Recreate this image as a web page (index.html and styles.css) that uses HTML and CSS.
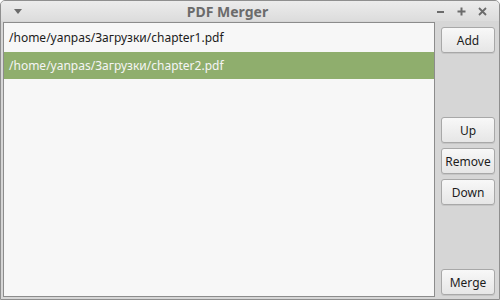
FILE: index.html
```html
<!DOCTYPE html>
<html>
<head>
<meta charset="utf-8">
<link rel="stylesheet" href="styles.css">
</head>
<body>
<div class="window">
  <div class="titlebar">
    <svg class="menu-icon" width="8" height="5" viewBox="0 0 8 5"><path d="M0 0H8L4 5Z" fill="#6b6b6b"/></svg>
    <div class="title">PDF Merger</div>
    <div class="controls">
      <svg width="9" height="9" viewBox="0 0 9 9"><path d="M1 5H8" stroke="#6b6b6b" stroke-width="2"/></svg>
      <svg width="9" height="9" viewBox="0 0 9 9"><path d="M0.5 4.5H8.5M4.5 0.5V8.5" stroke="#6b6b6b" stroke-width="2"/></svg>
      <svg width="9" height="9" viewBox="0 0 9 9"><path d="M1 1L8 8M8 1L1 8" stroke="#6b6b6b" stroke-width="1.8"/></svg>
    </div>
  </div>
  <div class="content">
    <div class="list">
      <div class="row">/home/yanpas/Загрузки/chapter1.pdf</div>
      <div class="row selected">/home/yanpas/Загрузки/chapter2.pdf</div>
    </div>
    <div class="sidebar">
      <button class="btn">Add</button>
      <div class="group">
        <button class="btn">Up</button>
        <button class="btn">Remove</button>
        <button class="btn">Down</button>
      </div>
      <button class="btn">Merge</button>
    </div>
  </div>
</div>
</body>
</html>
```
FILE: styles.css
```css
html, body {
  margin: 0;
  padding: 0;
  background: #ffffff;
}
.window {
  box-sizing: border-box;
  width: 500px;
  height: 300px;
  border: 1px solid #8f8f8f;
  border-radius: 5px 5px 0 0;
  background: #d6d6d6;
  display: flex;
  flex-direction: column;
  font-family: "Noto Sans", "Open Sans", sans-serif;
  overflow: hidden;
}
.titlebar {
  height: 20px;
  flex: none;
  display: flex;
  align-items: center;
  background: linear-gradient(#ececec, #dcdcdc);
  padding: 0 12px 0 13px;
  box-sizing: border-box;
}
.menu-icon {
  flex: none;
}
.title {
  flex: 1;
  text-align: center;
  font-weight: bold;
  font-size: 14px;
  color: #6b6b6b;
  padding-right: 3px;
}
.controls {
  display: flex;
  gap: 12px;
  align-items: center;
}
.content {
  flex: 1;
  display: flex;
  padding: 1px 4px 2px 2px;
  gap: 6px;
  min-height: 0;
}
.list {
  flex: 1;
  background: #f7f7f7;
  border: 1px solid #8c8c8c;
}
.row {
  height: 29px;
  line-height: 29px;
  padding-left: 5px;
  font-size: 12px;
  color: #1c1c1c;
}
.row.selected {
  height: 27px;
  line-height: 27px;
  background: #8fae6d;
  color: #f5f5f5;
}
.sidebar {
  width: 54px;
  display: flex;
  flex-direction: column;
  justify-content: space-between;
  padding: 5px 0 2px;
}
.group {
  display: flex;
  flex-direction: column;
  gap: 5px;
}
.btn {
  box-sizing: border-box;
  width: 54px;
  height: 26px;
  padding: 0;
  border: 1px solid #a8a8a8;
  border-radius: 3px;
  background: linear-gradient(#f8f8f8, #e6e6e6);
  box-shadow: 0 1px 0 rgba(0,0,0,0.08);
  font-family: "Noto Sans", "Open Sans", sans-serif;
  font-size: 12px;
  color: #1c1c1c;
}
```
